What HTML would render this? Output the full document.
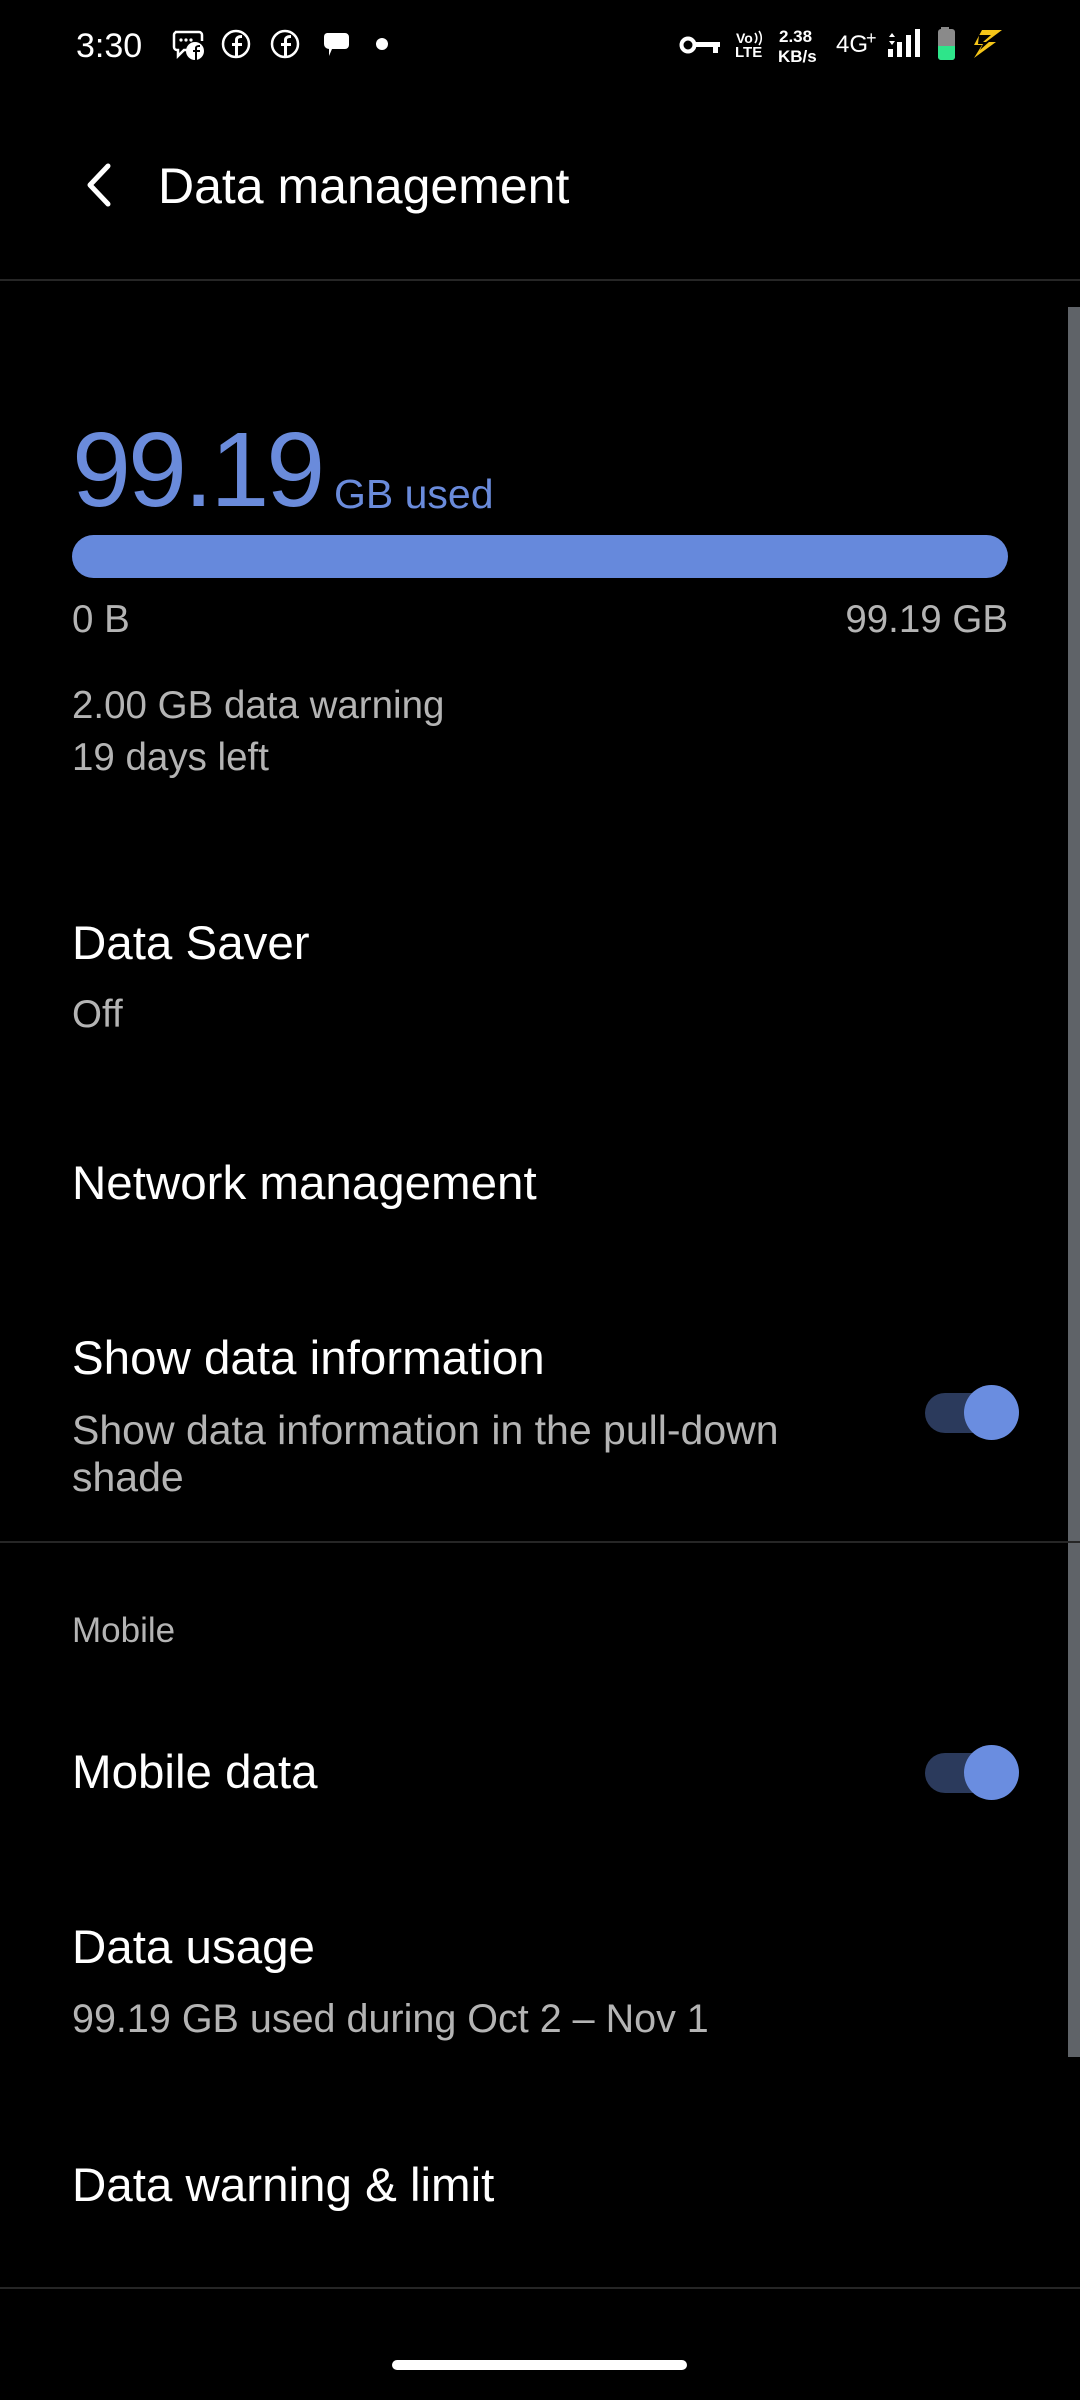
<!DOCTYPE html>
<html><head><meta charset="utf-8"><style>
html,body{margin:0;padding:0;background:#000;}
body{width:1080px;height:2400px;position:relative;overflow:hidden;font-family:"Liberation Sans",Roboto,sans-serif;color:#fff;}
.t{position:absolute;line-height:1;white-space:nowrap;}
.h{font-size:47.5px;color:#fff;}
.s{font-size:38.5px;color:#b4b4b4;}
.div{position:absolute;left:0;width:1080px;height:2px;background:#262626;}
.tg{position:absolute;width:94px;height:56px;}
.tg .tr{position:absolute;left:0;top:8px;width:88px;height:40px;border-radius:20px;background:#2b3a5c;}
.tg .th{position:absolute;left:39px;top:0;width:55px;height:55px;border-radius:50%;background:#6a8de0;}
</style></head><body>
<!-- status bar -->
<div class="t" style="left:76px;top:29px;font-size:34px;">3:30</div>
<svg style="position:absolute;left:168px;top:26px" width="220" height="36" viewBox="168 26 220 36">
 <g fill="none" stroke="#fff" stroke-width="2.5">
  <path d="M175 32h24a3 3 0 0 1 3 3v6M196 50h-12l-6 6v-6h-1a3 3 0 0 1-3-3V35a3 3 0 0 1 3-3"/>
  <circle cx="236" cy="44" r="13"/>
  <circle cx="285" cy="44" r="13"/>
 </g>
 <circle cx="195" cy="51" r="9" fill="#fff"/>
 <path d="M197 60v-8h3v-2h-3v-2c0-1 1-1 3-1v-2c-3 0-5 1-5 3v2h-2v2h2v8z" fill="#000"/>
 <circle cx="181" cy="40" r="1.6" fill="#fff"/><circle cx="186" cy="40" r="1.6" fill="#fff"/><circle cx="191" cy="40" r="1.6" fill="#fff"/>
 <path d="M238 58v-12h4v-3h-4v-3c0-1.5 1-2 4-2v-3c-4 0-7 1.5-7 5v3h-3v3h3v12z" fill="#fff"/>
 <path d="M287 58v-12h4v-3h-4v-3c0-1.5 1-2 4-2v-3c-4 0-7 1.5-7 5v3h-3v3h3v12z" fill="#fff"/>
 <path d="M327 33h18a4 4 0 0 1 4 4v8a4 4 0 0 1-4 4h-13l-3 7v-7a5 5 0 0 1-5-5v-7a4 4 0 0 1 3-4z" fill="#fff"/>
 <circle cx="382" cy="44" r="6" fill="#fff"/>
</svg>
<svg style="position:absolute;left:676px;top:24px" width="330" height="42" viewBox="676 24 330 42">
 <circle cx="688" cy="45" r="6.5" fill="none" stroke="#fff" stroke-width="4"/>
 <rect x="694" y="42" width="26" height="5" fill="#fff"/><rect x="713" y="45" width="5" height="8" fill="#fff"/>
 <text x="736" y="43" font-size="14" font-weight="bold" fill="#fff" font-family="Liberation Sans">Vo</text>
 <path d="M755 33a8 8 0 0 1 0 10M759 31a12 12 0 0 1 0 14" stroke="#fff" stroke-width="1.6" fill="none"/>
 <text x="735" y="57" font-size="15" font-weight="bold" fill="#fff" font-family="Liberation Sans">LTE</text>
 <text x="779" y="42" font-size="17" font-weight="bold" fill="#fff" font-family="Liberation Sans">2.38</text>
 <text x="778" y="62" font-size="17" font-weight="bold" fill="#fff" font-family="Liberation Sans">KB/s</text>
 <text x="836" y="52" font-size="24" fill="#fff" font-family="Liberation Sans">4G</text>
 <text x="866" y="44" font-size="18" fill="#fff" font-family="Liberation Sans">+</text>
 <path d="M889 37l3-4 3 4zM889 41l3 4 3-4z" fill="#fff"/>
 <rect x="888" y="49" width="5" height="8" fill="#fff"/><rect x="897" y="42" width="5" height="15" fill="#fff"/><rect x="906" y="35" width="5" height="22" fill="#fff"/><rect x="915" y="29" width="5" height="28" fill="#fff"/>
 <rect x="941" y="27" width="8" height="3" fill="#888"/>
 <rect x="938" y="29" width="17" height="31" rx="3" fill="#8a8a8a"/>
 <path d="M938 46h17v11a3 3 0 0 1-3 3h-11a3 3 0 0 1-3-3z" fill="#2ee58a"/>
 <path d="M974 30h28l-16 12h10l-22 16 8-13h-8l8-15z" fill="#f5c518"/>
 <path d="M979 35h12l-8 7h6l-9 8 3-6h-5z" fill="#000"/>
</svg>
<!-- app bar -->
<svg style="position:absolute;left:80px;top:160px" width="36" height="50" viewBox="0 0 36 50"><path d="M28 6L10 25l18 19" fill="none" stroke="#fff" stroke-width="5" stroke-linecap="round" stroke-linejoin="round"/></svg>
<div class="t" style="left:158px;top:161px;font-size:50px;">Data management</div>
<div class="div" style="top:279px;"></div>
<div style="position:absolute;left:1068px;top:307px;width:12px;height:1750px;background:#5f6368;"></div>
<!-- usage -->
<div class="t" style="left:72px;top:417px;font-size:106px;color:#6a8bdb;letter-spacing:-3px;">99.19</div>
<div class="t" style="left:334px;top:474px;font-size:41px;color:#6a8bdb;">GB used</div>
<div style="position:absolute;left:72px;top:535px;width:936px;height:43px;border-radius:22px;background:#6689dc;"></div>
<div class="t s" style="left:72px;top:601px;">0 B</div>
<div class="t s" style="right:72px;top:601px;">99.19 GB</div>
<div class="t s" style="left:72px;top:687px;">2.00 GB data warning</div>
<div class="t s" style="left:72px;top:739px;">19 days left</div>
<div class="t h" style="left:72px;top:920px;">Data Saver</div>
<div class="t s" style="left:72px;top:996px;">Off</div>
<div class="t h" style="left:72px;top:1160px;">Network management</div>
<div class="t h" style="left:72px;top:1335px;">Show data information</div>
<div class="t s" style="left:72px;top:1410px;font-size:41px;">Show data information in the pull-down</div>
<div class="t s" style="left:72px;top:1457px;font-size:41px;">shade</div>
<div class="tg" style="left:925px;top:1385px;"><div class="tr"></div><div class="th"></div></div>
<div class="div" style="top:1541px;"></div>
<div class="t" style="left:72px;top:1613px;font-size:35px;color:#b4b4b4;">Mobile</div>
<div class="t h" style="left:72px;top:1749px;">Mobile data</div>
<div class="tg" style="left:925px;top:1745px;"><div class="tr"></div><div class="th"></div></div>
<div class="t h" style="left:72px;top:1924px;">Data usage</div>
<div class="t s" style="left:72px;top:2000px;font-size:39.5px;">99.19 GB used during Oct 2 – Nov 1</div>
<div class="t h" style="left:72px;top:2162px;">Data warning &amp; limit</div>
<div class="div" style="top:2287px;"></div>
<div style="position:absolute;left:392px;top:2360px;width:295px;height:10px;border-radius:5px;background:#fff;"></div>
</body></html>
